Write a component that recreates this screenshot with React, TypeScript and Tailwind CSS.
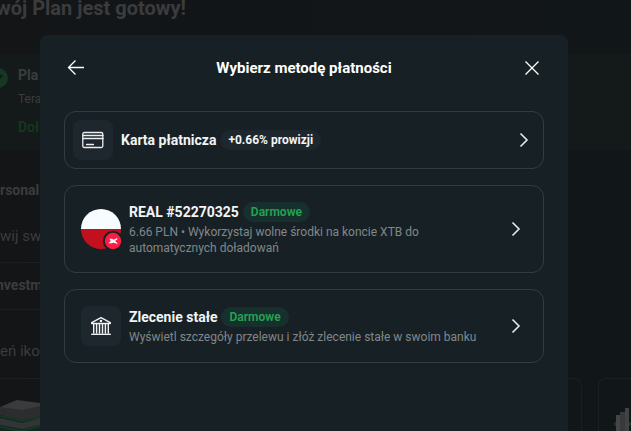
import React from 'react';

interface PaymentMethodProps {
  icon: React.ReactNode;
  title: string;
  badge: string;
  free?: boolean;
  description?: string;
}

const CardIcon = () => (
  <svg className="w-6 h-6" viewBox="0 0 24 24" fill="none" stroke="#eceeef" strokeWidth="1.3" strokeLinecap="round">
    <rect x="1.8" y="4.5" width="20" height="15" rx="1.5" />
    <path d="M2 7.5h20M2 10.5h20M5.5 16.5h7" />
  </svg>
);

const BankIcon = () => (
  <svg className="w-6 h-6" viewBox="0 0 24 24" fill="none" stroke="#f0f1f2" strokeWidth="1.4" strokeLinejoin="round">
    <path d="M12 3.6L21.3 8.6v.9H2.7v-.9z" />
    <path d="M4.7 9.5v10M7.6 9.5v10M10.5 9.5v10M13.5 9.5v10M16.4 9.5v10M19.3 9.5v10" />
    <path d="M2.2 20.3h19.6" />
    <circle cx="12" cy="7" r="0.6" />
  </svg>
);

const FlagIcon = () => (
  <svg className="w-10 h-10 shrink-0 overflow-visible" viewBox="0 0 40 40">
    <path d="M0 20a20 20 0 0 1 40 0z" fill="#f7fcff" />
    <path d="M0 20a20 20 0 0 0 40 0z" fill="#c3101f" />
    <circle cx="32" cy="32" r="9.2" fill="#fb1d45" stroke="#172125" strokeWidth="2" />
    <path d="M28.2 29.8h3.2l1 1 3.9-1.8v1.2l-2.3 1.9 2.3 1.8v1.2l-4-1.7-1.3.9h-3.6l2.3-2.2z" fill="#fff" />
  </svg>
);

const Chevron = () => (
  <svg className="w-6 h-6 shrink-0" viewBox="0 0 24 24" fill="none" stroke="#e6e8e9" strokeWidth="1.6">
    <path d="M9.5 5.5L16 12l-6.5 6.5" />
  </svg>
);

const IconBox = ({ children }: { children: React.ReactNode }) => (
  <span className="flex w-10 h-10 shrink-0 items-center justify-center rounded-lg bg-[#1f272e]">{children}</span>
);

const PaymentMethod: React.FC<PaymentMethodProps> = ({ icon, title, badge, free, description }) => (
  <button
    type="button"
    className={`flex w-full items-center gap-2 rounded-xl border border-[#333c41] text-left ${description ? 'p-4' : 'p-2'}`}
  >
    {icon}
    <span className="flex min-w-0 flex-1 flex-col gap-0.5">
      <span className="flex items-center gap-1">
        <span className="text-sm leading-5 font-bold text-[#f2f4f5]">{title}</span>
        <span
          className={`rounded-full px-2 text-xs leading-5 ${
            free ? 'bg-[#18302d] font-semibold text-[#22a553]' : 'bg-[#1f272e] font-bold text-[#f2f4f5]'
          }`}
        >
          {badge}
        </span>
      </span>
      {description && <span className="max-w-[352px] text-xs leading-4 text-[#81878a]">{description}</span>}
    </span>
    <Chevron />
  </button>
);

const PlanPage = () => (
  <main className="min-h-screen overflow-hidden bg-linear-to-r from-[#131517] to-[#111619] text-[#3b3c3e]">
    <h1 className="-ml-1 h-[54px] text-xl leading-4 font-bold">wój Plan jest gotowy!</h1>

    {/* Status banner */}
    <div className="flex h-24 gap-2.5 bg-[#141a1a]">
      <svg className="-ml-3 mt-3.5 w-5 h-5" viewBox="0 0 20 20">
        <circle cx="10" cy="10" r="10" fill="#153724" />
        <path d="M6 10l3 3 5-6" fill="none" stroke="#101617" strokeWidth="2" />
      </svg>
      <div className="pt-[9px]">
        <p className="text-sm leading-6 font-bold">Pla</p>
        <p className="text-xs leading-6">Tera</p>
        <p className="pt-1 text-sm leading-6 font-bold text-[#15361f]">Doł</p>
      </div>
    </div>

    <h2 className="pt-7 text-sm leading-6 font-bold">rsonal</h2>
    <div className="w-1/2">
      <p className="border-b border-[#1c1e20] pt-[22px] pb-3.5 text-[15px] leading-6">wij sw</p>
      <p className="-ml-1 border-b border-[#1c1e20] pt-2.5 pb-3 text-sm leading-6 font-bold">nvestm</p>
    </div>
    <p className="pt-[29px] pb-[15px] text-[15px] leading-6">eń iko</p>

    {/* Icon tiles */}
    <div className="flex gap-4">
      <div className="h-24 w-[582px] shrink-0 rounded-tr-lg border-t border-r border-[#1b1f21] pt-5">
        <svg className="w-10 h-8" viewBox="0 0 40 32">
          <path d="M1 16L20 20 40 16V32H0z" fill="#12281f" />
          <path d="M0 8L17 1 40 4V17L22 20 0 14z" fill="#3a3b3c" />
          <path d="M0 8l22 3 18-4v10l-18 4L0 16z" fill="#2c2d2e" />
          <path d="M0 19l22 5 18-5v7l-18 4L0 26z" fill="#333435" />
          <path d="M4 10v5" stroke="#123722" strokeWidth="2" />
          <path d="M0 17l22 5 18-4M0 28l22 4 18-5" fill="none" stroke="#153b28" strokeWidth="1.5" />
        </svg>
      </div>
      <div className="h-24 flex-1 rounded-tl-lg border-t border-l border-[#1b1f21] pt-7 pl-3.5">
        <svg className="w-5 h-6" viewBox="0 0 20 24">
          <path d="M1 15h3v4H1zM16 15h4v4h-4z" fill="#123a25" />
          <path d="M3 8h4v16H3z" fill="#444546" />
          <path d="M7 5h5v19H7z" fill="#38393a" />
          <path d="M12 1h4v23h-4z" fill="#414243" />
        </svg>
      </div>
    </div>
  </main>
);

export default function App() {
  return (
    <div className="h-screen overflow-hidden font-[Roboto,sans-serif]">
      <PlanPage />

      <div className="fixed inset-0 pt-[35px] pr-[63px] pl-10">
        <div role="dialog" aria-labelledby="dialog-title" className="h-full rounded-t-lg bg-[#172125]">
          <header className="flex items-center justify-between px-6 py-[21px]">
            <button type="button" aria-label="Wstecz">
              <svg className="w-6 h-6" viewBox="0 0 24 24" fill="none" stroke="#fff" strokeWidth="1.3">
                <path d="M20 11.5H4.5M11.5 4.5l-7 7 7 7" />
              </svg>
            </button>
            <h2 id="dialog-title" className="text-[15px] leading-6 font-bold text-white">Wybierz metodę płatności</h2>
            <button type="button" aria-label="Zamknij">
              <svg className="w-6 h-6" viewBox="0 0 24 24" fill="none" stroke="#fff" strokeWidth="1.3">
                <path d="M5.5 5.5l13 13M18.5 5.5l-13 13" />
              </svg>
            </button>
          </header>

          <div className="flex flex-col gap-4 px-6 pt-2.5">
            <PaymentMethod icon={<IconBox><CardIcon /></IconBox>} title="Karta płatnicza" badge="+0.66% prowizji" />
            <PaymentMethod
              icon={<FlagIcon />}
              title="REAL #52270325"
              badge="Darmowe"
              free
              description="6.66 PLN • Wykorzystaj wolne środki na koncie XTB do automatycznych doładowań"
            />
            <PaymentMethod
              icon={<IconBox><BankIcon /></IconBox>}
              title="Zlecenie stałe"
              badge="Darmowe"
              free
              description="Wyświetl szczegóły przelewu i złóż zlecenie stałe w swoim banku"
            />
          </div>
        </div>
      </div>
    </div>
  );
}
